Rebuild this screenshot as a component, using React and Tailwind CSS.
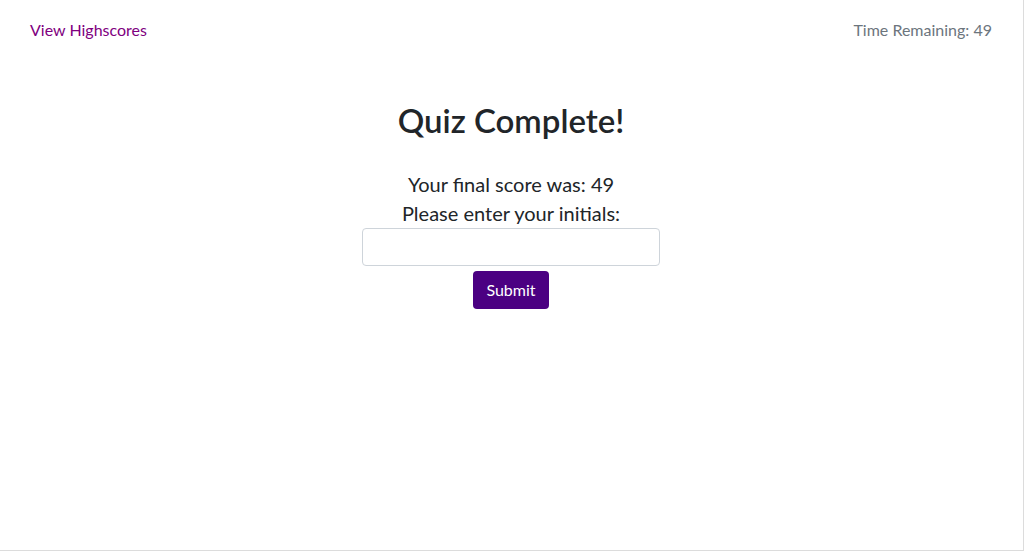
export default function App() {
  return (
    <div
      className="w-[1024px] h-[551px] bg-white border-r border-b border-[#dcdcdc] box-border text-[#212529]"
      style={{ fontFamily: '"Segoe UI", Lato, "Noto Sans", sans-serif' }}
    >
      <header className="flex justify-between items-center px-[30px] pt-[18px] text-[16px] leading-[24px]">
        <a className="text-[#800080]">View Highscores</a>
        <span className="text-[#6c757d] pr-[1px]">Time Remaining: 49</span>
      </header>
      <main className="flex flex-col items-center pr-[1px]">
        <h2 className="mt-[59px] text-[33px] leading-[38px] font-semibold">Quiz Complete!</h2>
        <p className="mt-[31px] text-[20px] leading-[29px]">Your final score was: 49</p>
        <p className="text-[20px] leading-[29px]">Please enter your initials:</p>
        <input
          type="text"
          className="mt-0 w-[298px] h-[38px] border border-[#ced4da] rounded-[4px] px-3 outline-none"
        />
        <button className="mt-[5px] w-[76px] h-[38px] bg-[#4b0082] text-white text-[16px] rounded-[4px]">
          Submit
        </button>
      </main>
    </div>
  );
}
